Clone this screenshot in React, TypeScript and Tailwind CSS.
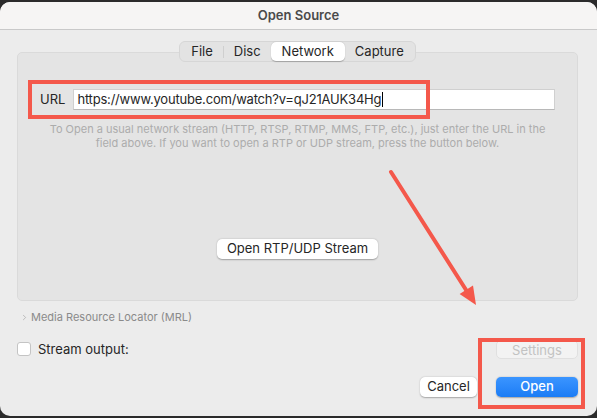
import { ChevronRight } from 'lucide-react';

export default function App() {
  const tabs = ['File', 'Disc', 'Network', 'Capture'];

  return (
    <div className="relative h-[418px] w-[597px] overflow-hidden bg-[#2b2b2b] font-['Inter','Liberation_Sans',sans-serif] text-[13px] text-[#262626]">
      <div className="mt-[2px] flex h-[414px] w-[597px] flex-col overflow-hidden rounded-[10px] bg-[#ececec]">
        {/* title bar */}
        <div className="flex h-[28px] shrink-0 items-center justify-center border-b border-[#c9c9c9] bg-[#f6f5f4]">
          <span className="text-[13px] font-semibold text-[#4a4a4a]">Open Source</span>
        </div>

        <div className="flex flex-1 flex-col px-[17px] pr-[19px] pt-[11px]">
          {/* tabs */}
          <div className="relative z-10 mx-auto flex h-[21px] items-center rounded-[6px] border border-[#d6d6d6] bg-[#e3e3e3] px-[1px]">
            {tabs.map((t, i) => (
              <div key={t} className="flex items-center">
                {i === 1 && <div className="h-[12px] w-px bg-[#cfcfcf]" />}
                <div
                  className={
                    t === 'Network'
                      ? 'flex h-[19px] items-center rounded-[5px] bg-white px-[11px] shadow-[0_0.5px_1px_rgba(0,0,0,0.25)]'
                      : 'flex h-[19px] items-center px-[10px]'
                  }
                >
                  {t}
                </div>
              </div>
            ))}
          </div>

          {/* group box */}
          <div className="-mt-[10px] flex h-[249px] flex-col rounded-[5px] border border-[#dadada] bg-[#e4e4e4] px-[22px] pt-[36px]">
            <div className="flex items-center gap-[8px]">
              <span className="text-[13px]">URL</span>
              <div className="flex h-[21px] flex-1 items-center border border-[#d0d0d0] border-b-[#b8b8b8] bg-white px-[3px]">
                <span className="text-[13px] tracking-[-0.2px]">https://www.youtube.com/watch?v=qJ21AUK34Hg</span>
                <span className="ml-px h-[15px] w-px bg-black" />
              </div>
            </div>
            <p className="mt-[12px] text-center text-[11px] leading-[14px] text-[#acacac]">
              To Open a usual network stream (HTTP, RTSP, RTMP, MMS, FTP, etc.), just enter the URL in the
              <br />
              field above. If you want to open a RTP or UDP stream, press the button below.
            </p>
            <div className="mt-[89px] flex justify-center">
              <button className="h-[20px] w-[161px] rounded-[5px] bg-white text-[13px] shadow-[0_0.5px_1.5px_rgba(0,0,0,0.3)]">
                Open RTP/UDP Stream
              </button>
            </div>
          </div>

          {/* MRL disclosure */}
          <div className="mt-[8px] flex items-center gap-[2px] pl-[3px] text-[11px] text-[#8a8a8a]">
            <ChevronRight size={9} strokeWidth={1.5} className="text-[#9a9a9a]" />
            <span>Media Resource Locator (MRL)</span>
          </div>

          {/* stream output */}
          <div className="mt-[14px] flex items-center justify-between">
            <label className="flex items-center gap-[7px]">
              <span className="h-[14px] w-[14px] rounded-[3px] border border-[#c4c4c4] bg-white" />
              <span className="text-[13px]">Stream output:</span>
            </label>
            <button className="h-[19px] w-[82px] rounded-[5px] border border-[#e0e0e0] bg-[#f3f3f3] text-[13px] text-[#c2c2c2]">
              Settings
            </button>
          </div>

          {/* footer buttons */}
          <div className="mt-[18px] flex justify-end gap-[19px]">
            <button className="h-[20px] w-[57px] rounded-[5px] bg-white text-[13px] shadow-[0_0.5px_1.5px_rgba(0,0,0,0.3)]">
              Cancel
            </button>
            <button className="h-[20px] w-[82px] rounded-[5px] bg-gradient-to-b from-[#3b95ff] to-[#1a7cf5] text-[13px] font-medium text-white shadow-[0_0.5px_1.5px_rgba(0,0,0,0.3)]">
              Open
            </button>
          </div>
        </div>
      </div>

      {/* annotations */}
      <div className="pointer-events-none absolute left-[28px] top-[80px] h-[39px] w-[402px] border-[4px] border-[#f4584b]" />
      <div className="pointer-events-none absolute left-[478px] top-[338px] h-[71px] w-[107px] border-[4px] border-[#f4584b]" />
      <svg className="pointer-events-none absolute left-0 top-0" width="597" height="418">
        <line x1="391" y1="172" x2="468" y2="293" stroke="#f4584b" strokeWidth="4" strokeLinecap="round" />
        <polygon points="476,305 459.6,294.1 473,285.5" fill="#f4584b" />
      </svg>
    </div>
  );
}
